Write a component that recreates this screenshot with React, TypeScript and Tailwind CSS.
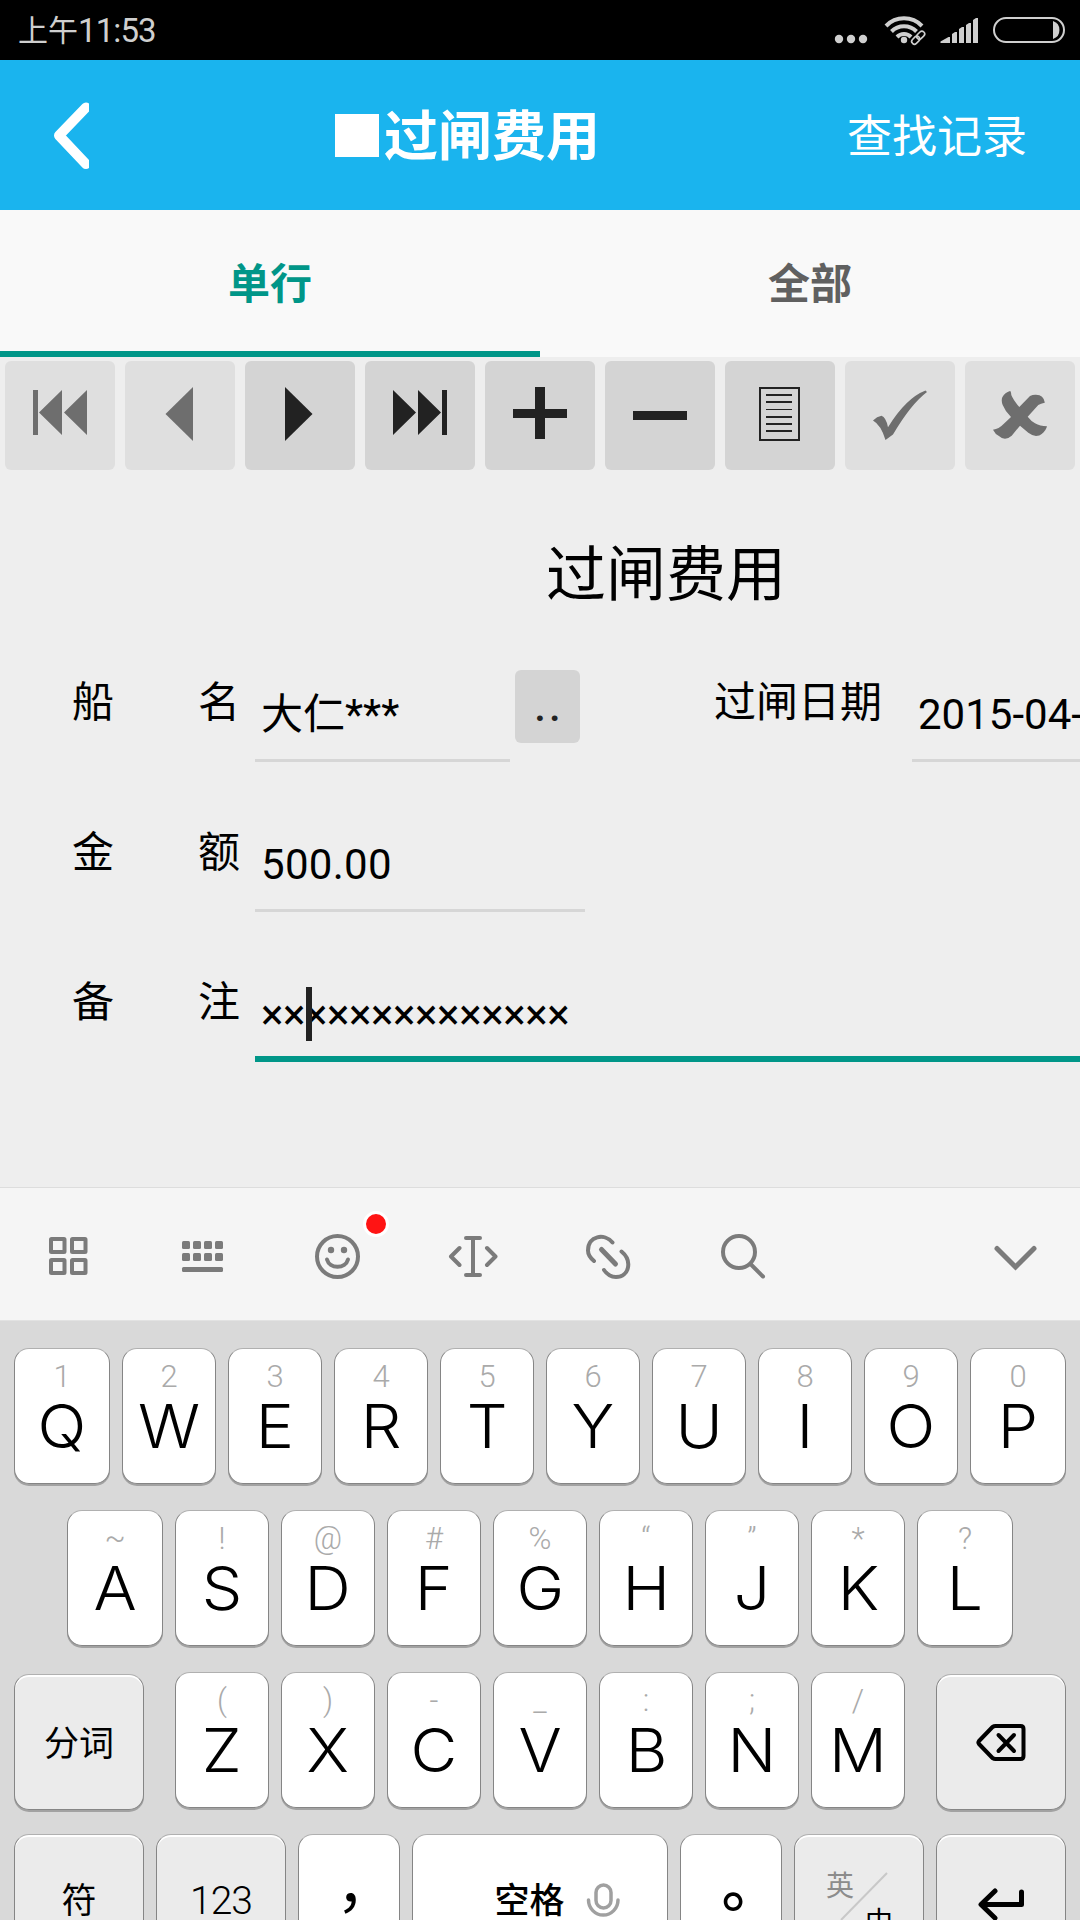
import type { ReactNode } from "react";

const topRow = ["1Q", "2W", "3E", "4R", "5T", "6Y", "7U", "8I", "9O", "0P"];
const middleRow = ["~A", "!S", "@D", "#F", "%G", "“H", "”J", "*K", "?L"];
const bottomRow = ["(Z", ")X", "-C", "_V", ":B", ";N", "/M"];

const StatusBar = () => {
  return (
    <div className="flex h-[60px] shrink-0 items-center justify-between bg-black pl-[18px] text-[#cfcfcf]">
      <div className="flex items-center">
        <span className="-mt-[3px] font-['Noto_Sans_CJK_SC',sans-serif] text-[30px]">
          上午
        </span>
        <span className="mt-px font-['Roboto',sans-serif] text-[33px] tracking-[-0.9px]">
          11:53
        </span>
      </div>
      <svg className="h-[60px] w-[250px]" viewBox="830 0 250 60" fill="currentColor">
        <circle cx="839" cy="39" r="4.2" />
        <circle cx="851" cy="39" r="4.2" />
        <circle cx="863" cy="39" r="4.2" />
        <g fill="none" stroke="currentColor" strokeWidth="4">
          <path d="M886 26a25 25 0 0 1 36 0" />
          <path d="M891.500 31.500a17.500 17.500 0 0 1 25 0" />
          <path d="M897 37a9.800 9.800 0 0 1 14 0" />
        </g>
        <circle cx="904" cy="40" r="3.2" />
        <g
          fill="none"
          stroke="currentColor"
          strokeWidth="1.6"
          transform="rotate(-45 918 37.500)"
        >
          <rect x="910" y="35" width="9" height="5.500" rx="2.700" />
          <rect x="917" y="35" width="9" height="5.500" rx="2.700" />
        </g>
        <path d="M940.500 43v-1.500l8-4.500h1.500v6z" />
        <path d="M952 43v-9l3-2h2v11z" />
        <path d="M959 43v-14l3-2h2v16z" />
        <path d="M966 43v-18l3-2h2v20z" />
        <path d="M973 43v-23l3-2h2v25z" />
        <rect
          x="994"
          y="18"
          width="70"
          height="24"
          rx="12"
          fill="none"
          stroke="currentColor"
          strokeWidth="2"
        />
        <path d="M1053 21a9.500 9.500 0 0 1 0 18z" />
      </svg>
    </div>
  );
};

const Header = () => {
  return (
    <header className="flex h-[150px] shrink-0 items-center bg-[#1ab4ee] font-['Noto_Sans_CJK_SC',sans-serif] text-white">
      <svg className="ml-[50px] h-[70px] w-[39px]" viewBox="50 100 39 70">
        <path
          d="M86 107.500 59 135.500l27 28.500"
          fill="none"
          stroke="white"
          strokeWidth="10"
          strokeLinecap="round"
          strokeLinejoin="round"
        />
      </svg>
      <div className="ml-[246px] flex items-center">
        <span className="mt-px h-[43px] w-11 bg-white"></span>
        <h1 className="-mt-[5px] ml-[5px] text-[54px] leading-[80px] font-bold">
          过闸费用
        </h1>
      </div>
      <button className="-mt-[3px] ml-[247px] text-[45px] leading-[80px]">
        查找记录
      </button>
    </header>
  );
};

const Tabs = () => {
  return (
    <div className="flex h-[147px] shrink-0 bg-[#f9f9f9] font-['Noto_Sans_CJK_SC',sans-serif] text-[42px] font-bold">
      <button className="flex-1 border-b-6 border-[#009688] text-[#009688]">
        单行
      </button>
      <button className="flex-1 border-b-6 border-transparent text-[#606060]">
        全部
      </button>
    </div>
  );
};

type ToolProps = { disabled?: boolean; children: ReactNode };

const Tool = ({ disabled, children }: ToolProps) => {
  return (
    <button
      className={
        disabled
          ? "h-[109px] w-[110px] rounded-md bg-[#dfdfdf] text-[#6e6e6e]"
          : "h-[109px] w-[110px] rounded-md bg-[#d4d4d4] text-[#222222]"
      }
    >
      <svg className="h-[109px] w-[110px]" viewBox="0 0 110 109" fill="currentColor">
        {children}
      </svg>
    </button>
  );
};

const Toolbar = () => {
  return (
    <div className="flex shrink-0 gap-[10px] px-[5px] pt-1">
      <Tool disabled>
        <path d="M28 29h5v45h-5zM57 29v45L34 51.500zM82 29v45L59 51.500z" />
      </Tool>
      <Tool disabled>
        <path d="M68 26v54L40.500 53z" />
      </Tool>
      <Tool>
        <path d="M40 26v54l27.500-27z" />
      </Tool>
      <Tool>
        <path d="M28 29v45l23-22.500zM53 29v45l23-22.500zM77 29h5v45h-5z" />
      </Tool>
      <Tool>
        <path d="M50 26h10v22h22v9H60v21H50V57H28v-9h22z" />
      </Tool>
      <Tool>
        <path d="M28 50h54v9H28z" />
      </Tool>
      <Tool>
        <path
          d="M35 27h39v52H35zM41 34h26M41 41h26M41 56h26M41 63h26M41 70h26"
          fill="none"
          stroke="currentColor"
          strokeWidth="2"
        />
        <path d="M41 48h26v1H41z" />
      </Tool>
      <Tool disabled>
        <path d="M28 59.500q4-4 8.500-4.800 4.500 1.500 6.500 11.500Q61 37 80.500 29.500l1.500 1.500Q66 43 48 73.500L40.500 79Q36 64 28 59.500z" />
      </Tool>
      <Tool disabled>
        <path d="M28 68.700Q34 68 38.300 63.300L46 56Q40 50 37.700 44 36 40 37.300 36.300 40 31.500 45 30q1 0 1.300 4 2 5 8 12L65 35q3-1.500 6-1.300 4 0 6 2 3 3 2.700 6-4 .8-6.400 2.300L62.700 55.700Q66 60 70 62.300q5 3 12 3-1 4.500-5.300 7.700-2 1.800-5.700 2-4-.5-7.700-3.300L55 64.700l-8.300 10q-3 2.800-6.700 3-3.500-.2-5.700-2.400Q30 73 28 68.700z" />
      </Tool>
    </div>
  );
};

const Label = ({ children }: { children: ReactNode }) => {
  return (
    <label className="mt-px w-[168px] shrink-0 font-['Noto_Sans_CJK_SC',sans-serif] text-[42px] leading-[60px] font-normal whitespace-pre">
      {children}
    </label>
  );
};

const Form = () => {
  return (
    <div className="h-[717px] shrink-0 overflow-hidden text-black">
      <h2 className="mt-[60px] ml-[546px] h-[138px] font-['Noto_Sans_CJK_SC',sans-serif] text-[60px] leading-[80px] font-normal">
        过闸费用
      </h2>
      <div className="flex h-[150px] pl-[72px] font-['Roboto','Noto_Sans_CJK_SC',sans-serif] text-[42px]">
        <Label>船{"\u3000\u3000"}名</Label>
        <div className="ml-[15px] h-[94px] w-[255px] shrink-0 border-b-3 border-[#d6d6d6] pl-[6px] leading-[94px]">
          大仁***
        </div>
        <button className="mt-[2px] ml-[5px] h-[73px] w-[65px] shrink-0 rounded-md bg-[#d4d4d4] pl-[3px] leading-[71px] font-medium tracking-[3px] text-[#222222]">
          ..
        </button>
        <div className="ml-[134px] flex shrink-0">
          <Label>过闸日期</Label>
          <div className="ml-[30px] h-[94px] w-[300px] border-b-3 border-[#d6d6d6] pl-[6px] leading-[94px]">
            2015-04-
          </div>
        </div>
      </div>
      <div className="flex h-[150px] pl-[72px] font-['Roboto',sans-serif] text-[42px]">
        <Label>金{"\u3000\u3000"}额</Label>
        <div className="ml-[15px] h-[94px] w-[330px] border-b-3 border-[#d6d6d6] pl-[6px] leading-[94px] tracking-[0.3px]">
          500.00
        </div>
      </div>
      <div className="flex h-[150px] pl-[72px] font-['Roboto',sans-serif] text-[42px]">
        <Label>备{"\u3000\u3000"}注</Label>
        <div className="relative ml-[15px] h-[94px] flex-1 border-b-6 border-[#009688] pl-[6px] leading-[94px] tracking-[-0.4px]">
          ××××××××××××××
          <span className="absolute top-[19px] left-[51px] h-[54px] w-[6px] bg-[#222222]"></span>
        </div>
      </div>
    </div>
  );
};

const ImeBar = () => {
  return (
    <div className="h-[134px] shrink-0 border-t border-b border-t-[#dddddd] border-b-[#e2e2e2] bg-[#f5f5f5]">
      <svg
        className="h-[132px] w-full text-[#7b7b7b]"
        viewBox="0 1188 1080 132"
        fill="none"
        stroke="currentColor"
        strokeWidth="4"
        strokeLinecap="round"
      >
        {/* panel grid */}
        <g>
          <rect x="51" y="1239" width="13.500" height="13" rx="0.500" />
          <rect x="72" y="1239" width="13.500" height="13" rx="0.500" />
          <rect x="51" y="1260" width="13.500" height="13" rx="0.500" />
          <rect x="72" y="1260" width="13.500" height="13" rx="0.500" />
        </g>
        {/* keyboard */}
        <g fill="currentColor" stroke="none">
          {[182, 193, 204, 215].map((x) => (
            <g key={x}>
              <rect x={x} y="1241" width="8" height="8" rx="1.500" />
              <rect x={x} y="1253" width="8" height="8" rx="1.500" />
            </g>
          ))}
          <rect x="182" y="1267" width="41" height="5" rx="1.500" />
        </g>
        {/* emoji */}
        <circle cx="337.500" cy="1256.500" r="20.500" />
        <path d="M327 1259.500a10.800 9.500 0 0 0 21 0" />
        <g fill="currentColor" stroke="none">
          <circle cx="331" cy="1250" r="3.200" />
          <circle cx="344" cy="1250" r="3.200" />
        </g>
        <circle cx="376" cy="1224" r="11.500" fill="#ff1414" stroke="white" strokeWidth="3" />
        {/* text cursor */}
        <path
          d="M459.500 1248l-8.500 8.500 8.500 8.500M487 1248l8.500 8.500-8.500 8.500M466 1238h14M466 1275h14M473 1238v37"
          strokeLinejoin="round"
        />
        {/* link */}
        <path d="M612.500 1242.500c-8-9.500-24.500-7-24.500 8 0 5 3 8 6 10.500M621.500 1251.500c11 9 8 25.500-5.500 25.500-5 0-9-2.500-12-7" />
        <path d="M601.500 1249.500l14 14.500" strokeWidth="5" />
        {/* search */}
        <circle cx="739" cy="1252" r="16" />
        <path d="M751 1264.500l12 12" />
        {/* hide keyboard */}
        <path d="M997 1248.500l18.500 18.500 18.500-18.500" strokeWidth="5" />
      </svg>
    </div>
  );
};

type LetterKeyProps = { keys: string; size?: string };

const LetterKey = ({ keys, size = "w-[94px]" }: LetterKeyProps) => {
  return (
    <button
      className={`flex h-[136px] shrink-0 flex-col items-center rounded-[15px] border border-t-[#b0b0b0] border-r-[#858585] border-b-[#858585] border-l-[#858585] bg-white font-light shadow-[0_2px_0_#a2a2a2] ${size}`}
    >
      <span className="mt-[10px] font-['Roboto',sans-serif] text-[31px] leading-[36px] text-[#aaaaaa]">
        {keys[0]}
      </span>
      <span className="scale-x-107 font-['Inter',sans-serif] text-[60px] leading-[62px] text-black">
        {keys[1]}
      </span>
    </button>
  );
};

type SideKeyProps = { white?: boolean; size: string; children: ReactNode };

const SideKey = ({ white, size, children }: SideKeyProps) => {
  return (
    <button
      className={`flex h-[136px] shrink-0 items-center justify-center rounded-[15px] border border-t-[#b0b0b0] border-r-[#858585] border-b-[#858585] border-l-[#858585] text-[35px] text-black ${
        white
          ? "bg-white shadow-[0_2px_0_#a2a2a2]"
          : "bg-[#ebebeb] shadow-[0_2px_0_#a2a2a2,inset_0_2px_0_#ffffff]"
      } ${size}`}
    >
      {children}
    </button>
  );
};

const Keyboard = () => {
  return (
    <div className="flex h-[599px] shrink-0 flex-col gap-[26px] overflow-hidden bg-[#d9d9d9] pt-[27px] font-['Noto_Sans_CJK_SC',sans-serif]">
      <div className="flex gap-3 pl-[14px]">
        {topRow.map((keys, i) => (
          <LetterKey
            key={keys}
            keys={keys}
            size={i === 0 || i === topRow.length - 1 ? "w-[96px]" : "w-[94px]"}
          />
        ))}
      </div>
      <div className="flex gap-3 pl-[67px]">
        {middleRow.map((keys, i) => (
          <LetterKey
            key={keys}
            keys={keys}
            size={i === 0 || i === middleRow.length - 1 ? "w-[96px]" : "w-[94px]"}
          />
        ))}
      </div>
      <div className="flex justify-between px-[14px]">
        <div className="mt-[2px] -mb-[2px]">
          <SideKey size="w-[130px] pb-[2px]">分词</SideKey>
        </div>
        <div className="flex gap-3">
          {bottomRow.map((keys) => (
            <LetterKey key={keys} keys={keys} />
          ))}
        </div>
        <div className="mt-[2px] -mb-[2px]">
          <SideKey size="w-[130px]">
            <svg
              className="h-[42px] w-[54px]"
              viewBox="974 1721 54 42"
              fill="none"
              stroke="black"
              strokeWidth="4"
              strokeLinecap="round"
              strokeLinejoin="round"
            >
              <path d="M992.500 1727q1.500-1 3-1h25q3 0 3 3v27q0 3-3 3h-25q-1.500 0-3-1l-13.500-14q-1.200-1.500 0-3z" />
              <path d="M998.500 1735l15.500 16M1014 1735l-15.500 16" />
            </svg>
          </SideKey>
        </div>
      </div>
      <div className="flex gap-3 pl-[14px]">
        <SideKey size="w-[130px] pb-[8px]">符</SideKey>
        <SideKey size="w-[130px] pb-[2px]">
          <span className="font-['Roboto',sans-serif] text-[39px] font-light tracking-[-1px]">
            123
          </span>
        </SideKey>
        <SideKey white size="w-[102px]">
          <span className="-mt-[42px] ml-[34px] text-[60px]">，</span>
        </SideKey>
        <SideKey white size="w-[256px] gap-[19px] pl-[34px] pb-[8px]">
          <span className="font-medium">空格</span>
          <svg
            className="mt-[4px] h-[38px] w-[36px]"
            viewBox="584 1880 36 38"
            fill="none"
            stroke="#a0a0a0"
            strokeWidth="3.500"
            strokeLinecap="round"
          >
            <rect x="596" y="1884" width="15" height="23" rx="7.500" />
            <path d="M588.500 1899a14.700 15 0 0 0 29.500 0" />
          </svg>
        </SideKey>
        <SideKey white size="w-[102px]">
          <span className="-mt-[42px] ml-[41px] text-[60px] font-medium">。</span>
        </SideKey>
        <SideKey size="relative w-[130px]">
          <span className="absolute top-[28px] left-[31px] text-[28px] text-[#8c8c8c]">
            英
          </span>
          <svg
            className="absolute top-[37px] left-[44px] h-[50px] w-[50px]"
            viewBox="0 0 50 50"
          >
            <path d="M48 1 2 48" stroke="#c8c8c8" strokeWidth="2" />
          </svg>
          <span className="absolute top-[64px] left-[70px] text-[28px]">中</span>
        </SideKey>
        <SideKey size="w-[130px]">
          <svg
            className="h-[40px] w-[50px]"
            viewBox="976 1883 50 40"
            fill="none"
            stroke="black"
            strokeWidth="5"
            strokeLinecap="round"
            strokeLinejoin="round"
          >
            <path d="M995 1892l-14 13.500 14 13.500M982 1905.500h39.500V1893" />
          </svg>
        </SideKey>
      </div>
    </div>
  );
};

const App = () => {
  return (
    <div className="flex h-[1920px] w-[1080px] flex-col overflow-hidden bg-[#eeeeee]">
      <StatusBar />
      <Header />
      <Tabs />
      <Toolbar />
      <Form />
      <ImeBar />
      <Keyboard />
    </div>
  );
};

export default App;
